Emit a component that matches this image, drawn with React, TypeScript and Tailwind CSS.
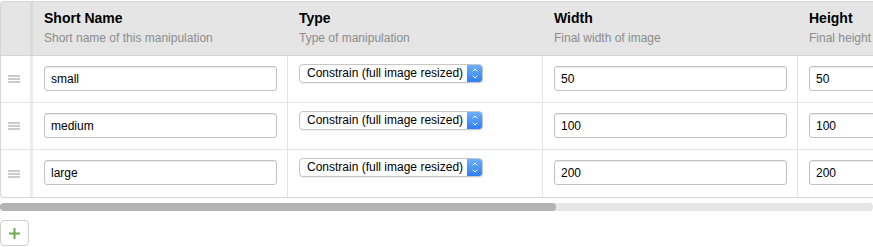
import { ChevronDown, ChevronUp } from 'lucide-react';

const columns = [
  { title: 'Short Name', hint: 'Short name of this manipulation', kind: 'text' },
  { title: 'Type', hint: 'Type of manipulation', kind: 'select' },
  { title: 'Width', hint: 'Final width of image', kind: 'text' },
  { title: 'Height', hint: 'Final height of image', kind: 'text' },
  { title: 'Quality', hint: 'JPEG quality of image', kind: 'text' },
];

const rows = [
  ['small', 'Constrain (full image resized)', '50', '50', ''],
  ['medium', 'Constrain (full image resized)', '100', '100', ''],
  ['large', 'Constrain (full image resized)', '200', '200', ''],
];

function Handle() {
  return (
    <svg width="12" height="8" viewBox="0 0 12 8" className="text-[#9a9a9a]">
      <path d="M0 1h12M0 4h12M0 7h12" stroke="currentColor" strokeWidth="1.2" />
    </svg>
  );
}

function TextInput({ value }: { value: string }) {
  return (
    <div className="h-[25px] w-full rounded-[3px] border border-[#c2c2c2] bg-white pl-[6px] text-[12px] leading-[25px] text-black shadow-[inset_0_1px_1px_rgba(0,0,0,0.08)]">
      {value}
    </div>
  );
}

function SelectBox({ value }: { value: string }) {
  return (
    <div className="flex h-[19px] w-[184px] items-stretch overflow-hidden rounded-[4px] border border-[#c6c6c6] bg-white shadow-[0_1px_1px_rgba(0,0,0,0.06)]">
      <span className="flex-1 pl-[7px] text-[12px] leading-[17px] text-black">{value}</span>
      <span className="flex w-[15px] flex-col items-center justify-center bg-gradient-to-b from-[#6cb0fb] to-[#2f7ff1] text-white">
        <ChevronUp size={8} strokeWidth={3} className="-mb-[1px]" />
        <ChevronDown size={8} strokeWidth={3} />
      </span>
    </div>
  );
}

export default function App() {
  return (
    <div className="w-[873px] bg-white pt-px font-['Liberation_Sans',Arial,sans-serif]">
      <div className="overflow-hidden rounded-tl-[4px] rounded-bl-[4px] border-t border-l border-b border-[#d6d6d6]">
        <div className="w-[1380px]">
          {/* header */}
          <div className="flex h-[54px] border-b border-[#d4d4d4] bg-[#e5e5e5]">
            <div className="w-[32px] shrink-0 border-r-[3px] border-[#dadada]" />
            {columns.map((c) => (
              <div key={c.title} className="w-[255px] shrink-0 pl-[11px] pt-[8px]">
                <div className="text-[14px] font-bold leading-[17px] text-black">{c.title}</div>
                <div className="mt-[4px] text-[12px] leading-[14px] text-[#8c8c8c]">{c.hint}</div>
              </div>
            ))}
          </div>

          {/* rows */}
          {rows.map((r, i) => (
            <div key={i} className={`flex h-[47px] ${i < rows.length - 1 ? 'border-b' : ''} border-[#e3e3e3]`}>
              <div className="flex w-[32px] shrink-0 items-center justify-center border-r-[3px] border-[#ececec] pr-[3px]">
                <Handle />
              </div>
              {columns.map((c, j) => (
                <div
                  key={c.title}
                  className={`w-[255px] shrink-0 border-[#e3e3e3] pl-[11px] pr-[10px] ${j < columns.length - 1 ? 'border-r' : ''} ${c.kind === 'select' ? 'pt-[8px]' : 'pt-[10px]'}`}
                >
                  {c.kind === 'select' ? <SelectBox value={r[j]} /> : <TextInput value={r[j]} />}
                </div>
              ))}
            </div>
          ))}
        </div>
      </div>

      {/* scrollbar */}
      <div className="mt-[5px] h-[8px] w-full rounded-full bg-[#e6e6e6]">
        <div className="h-full w-[556px] rounded-full bg-[#b3b3b3]" />
      </div>

      {/* add row */}
      <button className="mt-[9px] flex h-[26px] w-[29px] items-center justify-center rounded-[4px] border border-[#cfcfcf] bg-white">
        <svg width="11" height="11" viewBox="0 0 11 11">
          <path d="M5.5 0v11M0 5.5h11" stroke="#6aae4f" strokeWidth="2" />
        </svg>
      </button>
    </div>
  );
}
